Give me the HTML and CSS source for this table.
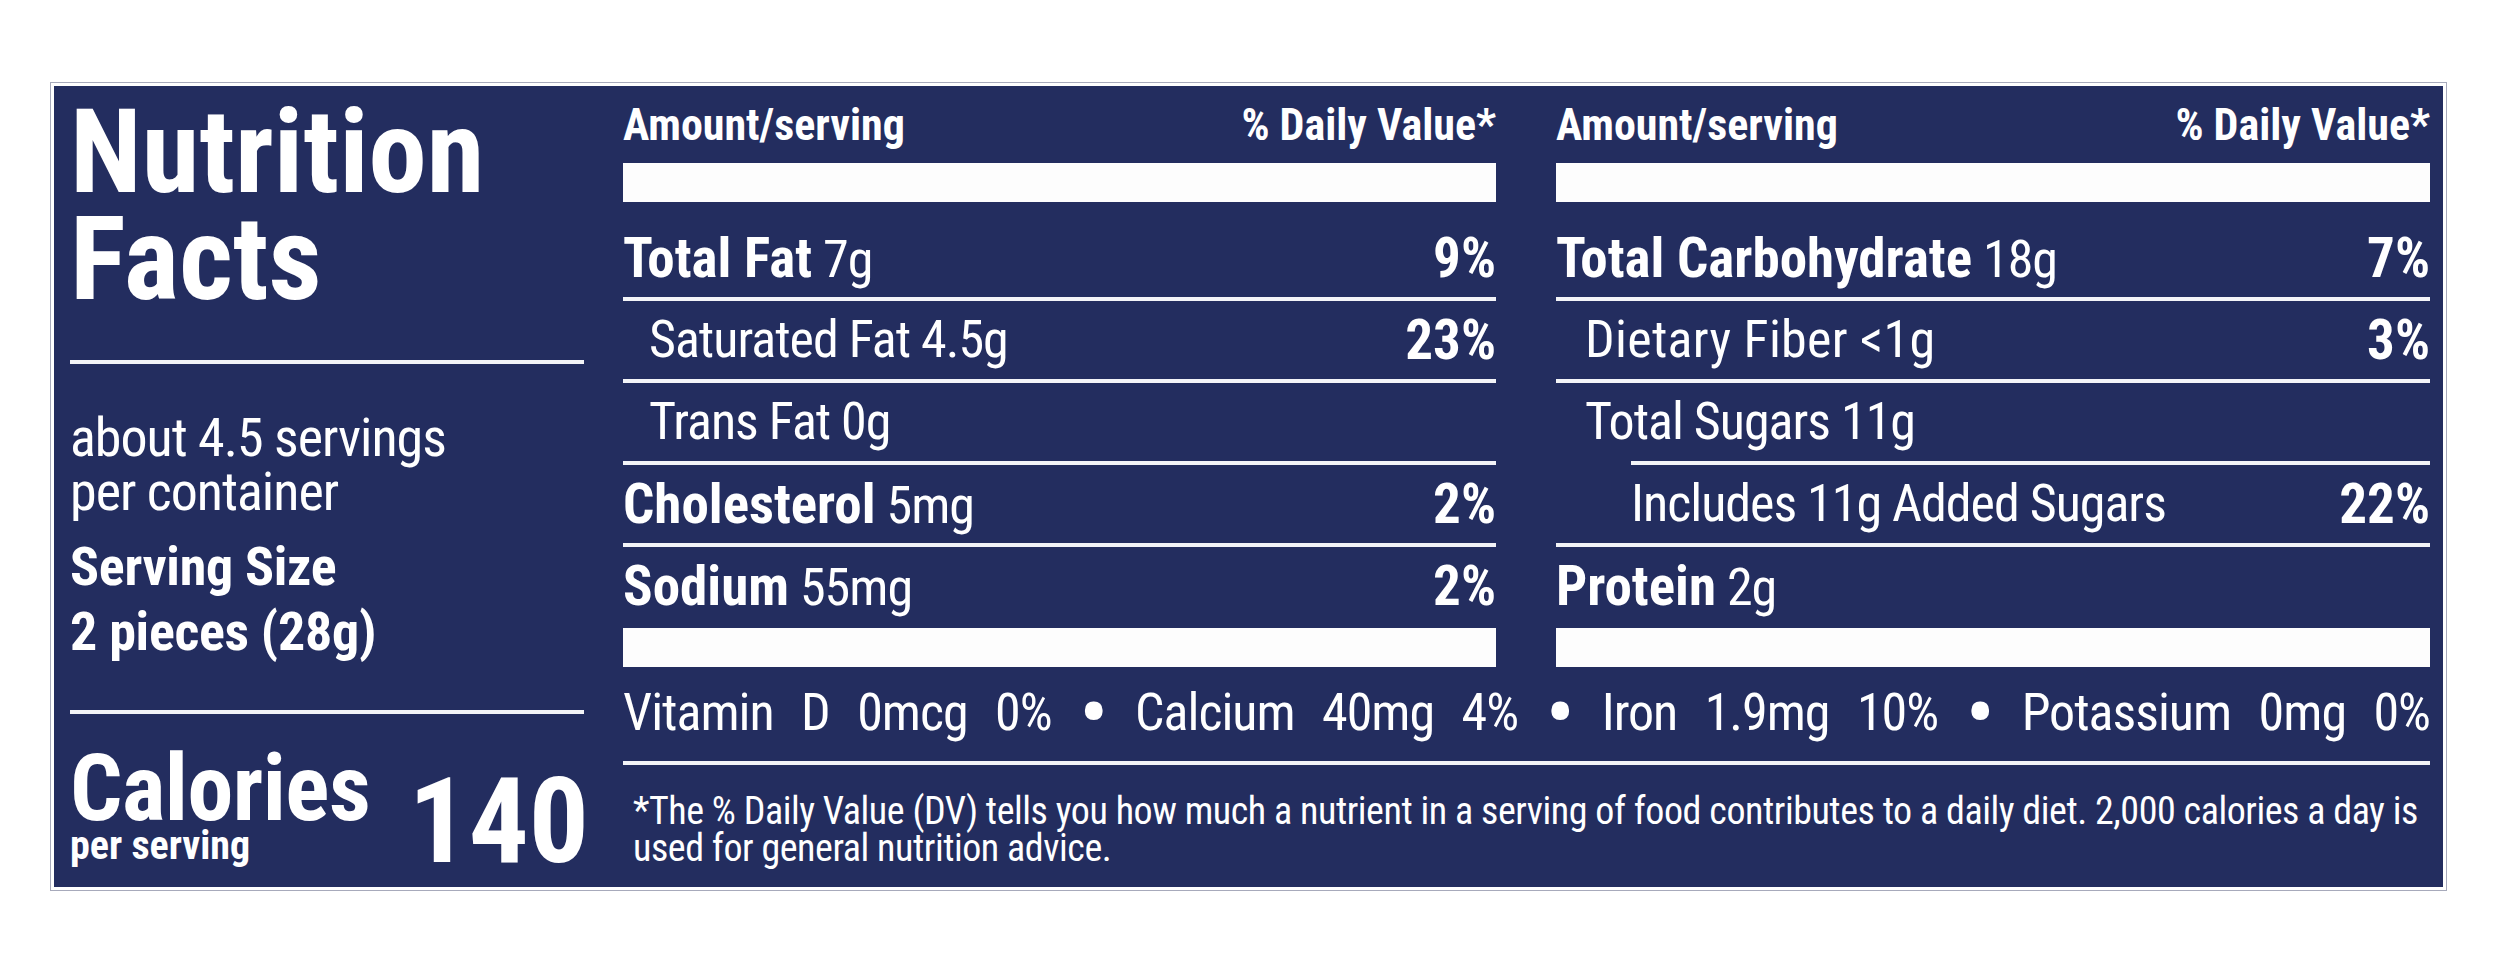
FILE: index.html
```html
<!DOCTYPE html>
<html lang="en">
<head>
<meta charset="utf-8">
<title>Nutrition Facts</title>
<link rel="stylesheet" href="styles.css">
</head>
<body>
<div class="page">
  <div class="frame">
    <div class="label">
      <div class="side">
        <h1 class="title">Nutrition<br>Facts</h1>
        <div class="rule rule-top"></div>
        <p class="servings">about 4.5 servings<br>per container</p>
        <p class="size">Serving Size<br>2 pieces (28g)</p>
        <div class="rule rule-bottom"></div>
        <div class="cal">
          <div class="cal-left">
            <div class="cal-word">Calories</div>
            <div class="cal-sub">per serving</div>
          </div>
          <div class="cal-num">140</div>
        </div>
      </div>
      <div class="main">
        <div class="cols">
          <div class="col">
            <div class="hdr"><span>Amount/serving</span><span>% Daily Value*</span></div>
            <div class="bar"></div>
            <div class="row first"><span><b>Total Fat</b> 7g</span><b>9%</b></div>
            <div class="row sub"><span>Saturated Fat 4.5g</span><b>23%</b></div>
            <div class="row sub"><span>Trans Fat 0g</span></div>
            <div class="row"><span><b>Cholesterol</b> 5mg</span><b>2%</b></div>
            <div class="row"><span><b>Sodium</b> 55mg</span><b>2%</b></div>
            <div class="bar bar-end"></div>
          </div>
          <div class="col">
            <div class="hdr"><span>Amount/serving</span><span>% Daily Value*</span></div>
            <div class="bar"></div>
            <div class="row first"><span><b>Total Carbohydrate</b> 18g</span><b>7%</b></div>
            <div class="row sub sub-r wide"><span>Dietary Fiber &lt;1g</span><b>3%</b></div>
            <div class="row sub sub-r"><span>Total Sugars 11g</span></div>
            <div class="row added"><span>Includes 11g Added Sugars</span><b>22%</b></div>
            <div class="row"><span><b>Protein</b> 2g</span></div>
            <div class="bar bar-end"></div>
          </div>
        </div>
        <div class="vitamins">
          <span>Vitamin</span><span>D</span><span>0mcg</span><span>0%</span><span class="dot">•</span>
          <span>Calcium</span><span>40mg</span><span>4%</span><span class="dot">•</span>
          <span>Iron</span><span>1.9mg</span><span>10%</span><span class="dot">•</span>
          <span>Potassium</span><span>0mg</span><span>0%</span>
        </div>
        <p class="foot">*The % Daily Value (DV) tells you how much a nutrient in a serving of food contributes to a daily diet. 2,000 calories a day is<br>used for general nutrition advice.</p>
      </div>
    </div>
  </div>
</div>
</body>
</html>
```

FILE: styles.css
```css
html, body {
  margin: 0;
  padding: 0;
  background: #ffffff;
}

body {
  font-family: "Roboto Condensed", "Liberation Sans", Arial, sans-serif;
  color: #ffffff;
}

.page {
  padding: 82px 0 0 50px;
}

.frame {
  width: 2389px;
  border: 1px solid #a7aabb;
  padding: 3px;
  background: #ffffff;
}

.label {
  display: flex;
  box-sizing: border-box;
  height: 801px;
  padding: 0 13px 0 16px;
  background: #232d5f;
}

/* ---------- left side ---------- */
.side {
  width: 514px;
  flex: 0 0 514px;
  margin-right: 39px;
  padding-top: 13px;
}

.title {
  margin: 0;
  font-size: 117px;
  line-height: 107px;
  font-weight: 700;
}

.rule {
  height: 4px;
  background: #f3f4f8;
}

.rule-top {
  margin-top: 47px;
}

.servings {
  margin: 47px 0 0;
  font-size: 54px;
  line-height: 54px;
  font-weight: 400;
  letter-spacing: -1px;
}

.size {
  margin: 15px 0 0;
  font-size: 54px;
  line-height: 65px;
  font-weight: 700;
  letter-spacing: -0.3px;
}

.rule-bottom {
  margin-top: 46px;
}

.cal {
  display: flex;
  justify-content: space-between;
  align-items: flex-end;
  margin-top: 38px;
}

.cal-word {
  font-size: 92px;
  line-height: 74px;
  font-weight: 700;
  letter-spacing: -0.5px;
}

.cal-sub {
  font-size: 40px;
  line-height: 40px;
  font-weight: 700;
}

.cal-num {
  margin-right: -5px;
  font-size: 119px;
  line-height: 89px;
  font-weight: 700;
}

/* ---------- main area ---------- */
.main {
  width: 1807px;
  flex: 0 0 1807px;
  padding-top: 14px;
}

.cols {
  display: grid;
  grid-template-columns: 873px 874px;
  column-gap: 60px;
}

.hdr {
  display: flex;
  justify-content: space-between;
  font-size: 44px;
  line-height: 50px;
  font-weight: 700;
}

.bar {
  height: 39px;
  margin-top: 13px;
  background: #fdfdfd;
}

.bar-end {
  margin-top: 3px;
}

.row {
  display: flex;
  justify-content: space-between;
  height: 78px;
  border-top: 4px solid #f3f4f8;
  font-size: 52px;
  line-height: 78px;
  font-weight: 400;
  letter-spacing: -1px;
}

.row b {
  font-size: 55px;
  font-weight: 700;
  letter-spacing: 0;
}

.row.first {
  margin-top: 17px;
  border-top: 0;
}

.row.sub {
  padding-left: 26px;
}

.row.sub-r {
  padding-left: 29px;
}

.row.wide {
  letter-spacing: 0.3px;
}

.row.added {
  margin-left: 75px;
}

.vitamins {
  display: flex;
  justify-content: space-between;
  height: 78px;
  margin-top: 7px;
  padding-bottom: 9px;
  border-bottom: 4px solid #f3f4f8;
  font-size: 52px;
  line-height: 78px;
  letter-spacing: -1px;
}

.vitamins .dot {
  font-size: 88px;
}

.foot {
  margin: 28px 0 0;
  padding-left: 10px;
  font-size: 38px;
  line-height: 37px;
  letter-spacing: -0.45px;
  white-space: nowrap;
}
```
